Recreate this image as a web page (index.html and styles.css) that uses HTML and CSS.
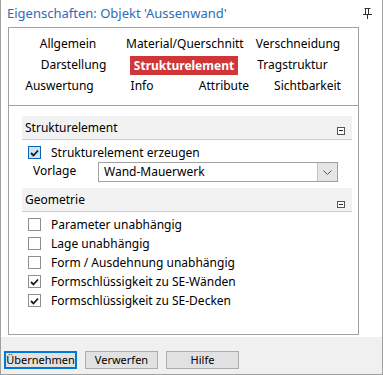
FILE: index.html
```html
<!DOCTYPE html>
<html lang="de">
<head>
<meta charset="utf-8">
<title>Eigenschaften</title>
<link rel="stylesheet" href="styles.css">
</head>
<body>
<div class="window">
  <div class="titlebar">
    <span class="title">Eigenschaften: Objekt 'Aussenwand'</span>
    <svg class="pin" width="9" height="11" viewBox="0 0 9 11">
      <path d="M1.5 0.5H7.5M2.5 0.5V6.5M5.5 0.5V6.5M0 6.5H9M4.5 6.5V11" stroke="#333" stroke-width="1" fill="none"/>
    </svg>
  </div>
  <div class="panel">
    <div class="tabs">
      <div class="tabrow r1">
        <span class="tab">Allgemein</span>
        <span class="tab">Material/Querschnitt</span>
        <span class="tab">Verschneidung</span>
      </div>
      <div class="tabrow r2">
        <span class="tab">Darstellung</span>
        <span class="tab active">Strukturelement</span>
        <span class="tab">Tragstruktur</span>
      </div>
      <div class="tabrow r3">
        <span class="tab">Auswertung</span>
        <span class="tab">Info</span>
        <span class="tab">Attribute</span>
        <span class="tab">Sichtbarkeit</span>
      </div>
    </div>
    <div class="content">
      <div class="group-header">
        <span>Strukturelement</span>
        <span class="collapse"></span>
      </div>
      <div class="row check-row">
        <span class="cb checked focus"><svg width="9" height="8" viewBox="0 0 9 8"><path d="M1 4L3.5 6.5L8 1.5" stroke="#1a1a1a" stroke-width="1.8" fill="none"/></svg></span>
        <span class="label">Strukturelement erzeugen</span>
      </div>
      <div class="row select-row">
        <span class="vlabel">Vorlage</span>
        <div class="select">
          <span class="select-text">Wand-Mauerwerk</span>
          <span class="select-btn"><svg width="9" height="5" viewBox="0 0 9 5"><path d="M0.5 0.5L4.5 4.5L8.5 0.5" stroke="#555" stroke-width="1" fill="none"/></svg></span>
        </div>
      </div>
      <div class="group-header geo">
        <span>Geometrie</span>
        <span class="collapse"></span>
      </div>
      <div class="geo-list">
        <div class="row check-row"><span class="cb"></span><span class="label">Parameter unabhängig</span></div>
        <div class="row check-row"><span class="cb"></span><span class="label">Lage unabhängig</span></div>
        <div class="row check-row"><span class="cb"></span><span class="label">Form / Ausdehnung unabhängig</span></div>
        <div class="row check-row"><span class="cb"><svg width="9" height="8" viewBox="0 0 9 8"><path d="M1 4L3.5 6.5L8 1.5" stroke="#1a1a1a" stroke-width="1.8" fill="none"/></svg></span><span class="label">Formschlüssigkeit zu SE-Wänden</span></div>
        <div class="row check-row"><span class="cb"><svg width="9" height="8" viewBox="0 0 9 8"><path d="M1 4L3.5 6.5L8 1.5" stroke="#1a1a1a" stroke-width="1.8" fill="none"/></svg></span><span class="label">Formschlüssigkeit zu SE-Decken</span></div>
      </div>
    </div>
  </div>
  <div class="footer">
    <button class="btn default">Übernehmen</button>
    <button class="btn">Verwerfen</button>
    <button class="btn">Hilfe</button>
  </div>
</div>
</body>
</html>
```

FILE: styles.css
```css
html, body {
  margin: 0;
  padding: 0;
  background: #ffffff;
}
body {
  font-family: "Noto Sans", "Open Sans", sans-serif;
  font-size: 12px;
  color: #000;
}
.window {
  box-sizing: border-box;
  width: 383px;
  height: 375px;
  border-left: 1px solid #a0a0a0;
  border-right: 1px solid #a0a0a0;
  border-bottom: 1px solid #a0a0a0;
  display: flex;
  flex-direction: column;
  background: #fff;
}
.titlebar {
  height: 27px;
  display: flex;
  align-items: center;
  justify-content: space-between;
  padding: 0 10px 0 6px;
}
.title {
  font-size: 13px;
  line-height: 27px;
  color: #2f6bb5;
}
.pin {
  display: block;
  margin-top: 0;
}
.panel {
  box-sizing: border-box;
  margin-left: 7px;
  width: 351px;
  height: 308px;
  border: 1px solid #a0a0a0;
  display: flex;
  flex-direction: column;
}
.tabs {
  height: 78px;
  box-sizing: border-box;
  padding-top: 5px;
  border-bottom: 1px solid #a0a0a0;
}
.tabrow {
  display: flex;
  height: 21px;
  line-height: 21px;
}
.tab {
  text-align: center;
  white-space: nowrap;
}
.r1 { padding-left: 1px; }
.r1 .tab:nth-child(1) { width: 116px; }
.r1 .tab:nth-child(2) { width: 114px; }
.r1 .tab:nth-child(3) { width: 116px; }
.r2 { padding-left: 8px; }
.r2 .tab:nth-child(1) { width: 113px; }
.r2 .tab:nth-child(2) { width: 108px; }
.r2 .tab:nth-child(3) { width: 109px; }
.r3 .tab:nth-child(1) { width: 101px; }
.r3 .tab:nth-child(2) { width: 64px; }
.r3 .tab:nth-child(3) { width: 100px; }
.r3 .tab:nth-child(4) { width: 67px; }
.tab.active {
  background: #d03638;
  color: #fff;
  font-weight: bold;
  height: 19px;
  line-height: 19px;
  margin-top: 2px;
}
.content {
  padding: 10px 6px 0 13px;
}
.group-header {
  height: 23px;
  line-height: 23px;
  background: #f2f2f2;
  border-bottom: 1px solid #cfcfcf;
  display: flex;
  justify-content: space-between;
  padding: 0 7px 0 3px;
}
.group-header.geo {
  margin-top: 6px;
}
.collapse {
  box-sizing: border-box;
  width: 8px;
  height: 8px;
  border: 1px solid #555;
  margin-top: 11px;
  position: relative;
  background: #fff;
}
.group-header.geo .collapse {
  margin-top: 13px;
  height: 7px;
}
.collapse::after {
  content: "";
  position: absolute;
  left: 1px;
  right: 1px;
  top: 2px;
  height: 1px;
  background: #222;
}
.row {
  display: flex;
  align-items: center;
}
.check-row {
  height: 19px;
  line-height: 19px;
  padding-left: 6px;
}
.content > .check-row {
  margin-top: 3px;
}
.cb {
  box-sizing: border-box;
  width: 13px;
  height: 13px;
  border: 1px solid #8f8f8f;
  background: #fff;
  display: flex;
  align-items: center;
  justify-content: center;
  margin-right: 10px;
  flex: none;
}
.cb.focus {
  border-color: #0a64b8;
  background: #cce4f7;
}
.cb svg { display: block; }
.select-row {
  height: 20px;
  align-items: flex-start;
  padding-left: 11px;
}
.vlabel {
  width: 65px;
  line-height: 17px;
}
.select {
  box-sizing: border-box;
  width: 240px;
  height: 20px;
  border: 1px solid #a0a0a0;
  display: flex;
  justify-content: space-between;
}
.select-text {
  line-height: 17px;
  padding-left: 5px;
}
.select-btn {
  width: 19px;
  background: #e5e5e5;
  border-left: 1px solid #c4c4c4;
  display: flex;
  align-items: center;
  justify-content: center;
}
.geo-list {
  padding-top: 3px;
}
.footer {
  margin-top: 2px;
  flex: 1;
  background: #f0f0f0;
  display: flex;
  gap: 8px;
  padding: 14px 0 0 3px;
  align-items: flex-start;
}
.btn {
  box-sizing: border-box;
  width: 73px;
  height: 18px;
  border: 1px solid #adadad;
  background: #e1e1e1;
  font-family: "Noto Sans", "Open Sans", sans-serif;
  font-size: 11px;
  line-height: 14px;
  padding: 0;
  color: #000;
}
.btn.default {
  border: 2px solid #0078d7;
}
```
